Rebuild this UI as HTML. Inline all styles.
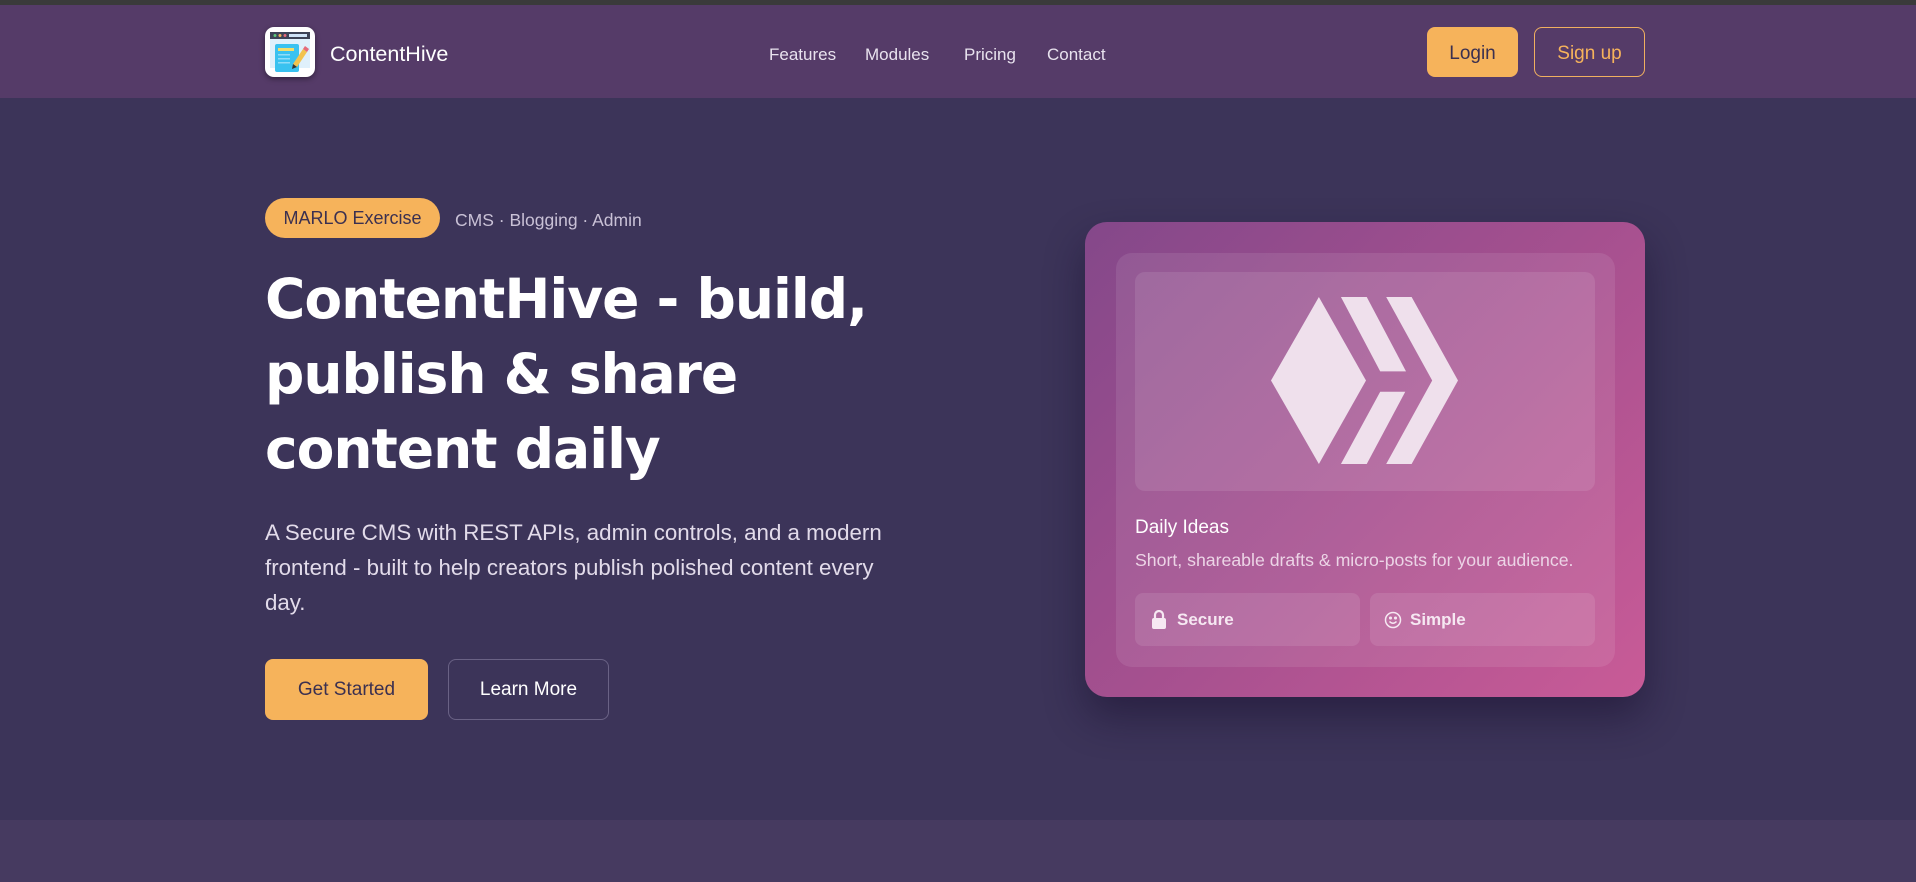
<!DOCTYPE html>
<html><head><meta charset="utf-8"><style>
*{margin:0;padding:0;box-sizing:border-box}
body{width:1916px;height:882px;overflow:hidden;background:#3c3459;font-family:"Liberation Sans",sans-serif;color:#fff;position:relative}
.top{position:absolute;left:0;top:0;width:1916px;height:5px;background:#3a3a3a}
nav{position:absolute;left:0;top:5px;width:1916px;height:93px;background:#553b68}
.logo{position:absolute;left:265px;top:22px;width:50px;height:50px;border-radius:9px;background:#fff;box-shadow:0 2px 6px rgba(0,0,0,.4);overflow:hidden}
.brand{position:absolute;left:330px;top:37px;font-size:21.5px;color:#fff}
.links{position:absolute;top:40px;font-size:17px;color:#e8e2ee}
.btn{position:absolute;border-radius:8px;font-size:19px;display:flex;align-items:center;justify-content:center}
.bot{position:absolute;left:0;top:820px;width:1916px;height:62px;background:#463a60}
.badge{position:absolute;left:265px;top:198px;width:175px;height:40px;border-radius:20px;background:#f6b35b;color:#3b3050;font-size:18px;display:flex;align-items:center;justify-content:center}
.tags{position:absolute;left:455px;top:210px;font-size:17.5px;color:#c9c1d6}
h1{position:absolute;left:265px;top:262px;font-family:"DejaVu Sans",sans-serif;font-size:55px;line-height:75px;font-weight:bold;letter-spacing:-1px;width:640px}
.p{position:absolute;left:265px;top:515px;font-size:22.3px;line-height:35px;color:#e2dbea;width:648px}
.card{position:absolute;left:1085px;top:222px;width:560px;height:475px;border-radius:22px;background:linear-gradient(135deg,#84488a 0%,#a5508f 50%,#c95b97 100%);box-shadow:0 20px 40px rgba(20,10,40,.45)}
.inner{position:absolute;left:31px;top:31px;width:499px;height:414px;border-radius:16px;background:rgba(255,255,255,.09)}
.img{position:absolute;left:19px;top:19px;width:460px;height:219px;border-radius:10px;background:rgba(255,255,255,.1)}
.chip{position:absolute;top:340px;width:225px;height:53px;border-radius:8px;background:rgba(255,255,255,.1);font-size:17px;font-weight:bold;color:#f6e8f2;display:flex;align-items:center}
</style></head><body>
<div class="top"></div>
<nav>
<div class="logo"><svg width="50" height="50" viewBox="0 0 50 50"><rect x="5" y="5" width="40" height="36" fill="#dff0fb"/><rect x="5" y="5" width="40" height="7" fill="#3d4356"/><circle cx="10" cy="8.5" r="1.5" fill="#5cc77a"/><circle cx="15" cy="8.5" r="1.5" fill="#f2b55b"/><circle cx="20" cy="8.5" r="1.5" fill="#e56a7a"/><rect x="24" y="7" width="18" height="3" fill="#cfe3f7"/><rect x="10" y="17" width="24" height="28" rx="2" fill="#39c2f0"/><rect x="13" y="21" width="16" height="3" fill="#f2dd6a"/><rect x="13" y="27" width="12" height="1.5" fill="#8fdcf8"/><rect x="13" y="31" width="12" height="1.5" fill="#8fdcf8"/><rect x="13" y="35" width="12" height="1.5" fill="#8fdcf8"/><path d="M28 37 L38 22 L42 25 L32 40 Z" fill="#f2c34e"/><path d="M38 22 L40 19 L44 22 L42 25Z" fill="#e56a7a"/><path d="M28 37 L32 40 L27 42Z" fill="#333"/></svg></div>
<div class="brand">ContentHive</div>
<div class="links" style="left:769px">Features</div>
<div class="links" style="left:865px">Modules</div>
<div class="links" style="left:964px">Pricing</div>
<div class="links" style="left:1047px">Contact</div>
<div class="btn" style="left:1427px;top:22px;width:91px;height:50px;padding-top:4px;background:#f6b35b;color:#3b3050">Login</div>
<div class="btn" style="left:1534px;top:22px;width:111px;height:50px;padding-top:4px;border:1.5px solid #f0b060;color:#f6b35b">Sign up</div>
</nav>
<div class="badge">MARLO Exercise</div>
<div class="tags">CMS · Blogging · Admin</div>
<h1>ContentHive - build, publish &amp; share content daily</h1>
<div class="p">A Secure CMS with REST APIs, admin controls, and a modern frontend - built to help creators publish polished content every day.</div>
<div class="btn" style="left:265px;top:659px;width:163px;height:61px;background:#f6b35b;color:#3b3050">Get Started</div>
<div class="btn" style="left:448px;top:659px;width:161px;height:61px;border:1px solid #6a6285;color:#fff">Learn More</div>
<div class="card"><div class="inner">
<div class="img"><svg style="position:absolute;left:136px;top:25px" width="187" height="167" viewBox="0 0 1000 1000" preserveAspectRatio="none" fill="#efe0ec"><path d="M256 0 L0 500 L256 1000 L508 500Z"/><path d="M374 0 L512 0 L722 445 L584 445Z"/><path d="M584 567 L718 567 L512 1000 L374 1000Z"/><path d="M616 0 L752 0 L1000 500 L752 1000 L616 1000 L862 500Z"/></svg></div>
<div style="position:absolute;left:19px;top:264px;font-size:19px;color:#fff">Daily Ideas</div>
<div style="position:absolute;left:19px;top:297px;font-size:17.7px;color:#ecd4e6">Short, shareable drafts &amp; micro-posts for your audience.</div>
<div class="chip" style="left:19px"><svg style="margin:0 10px 0 16px" width="16" height="19" viewBox="0 0 16 19"><path d="M4 8V5a4 4 0 0 1 8 0v3" stroke="#f6e8f2" stroke-width="2.2" fill="none"/><rect x="1" y="8" width="14" height="11" rx="2" fill="#f6e8f2"/></svg>Secure</div>
<div class="chip" style="left:254px"><svg style="margin:0 8px 0 14px" width="18" height="18" viewBox="0 0 18 18" fill="none" stroke="#f6e8f2" stroke-width="1.5"><circle cx="9" cy="9" r="7.5"/><circle cx="6.5" cy="7" r=".8" fill="#f6e8f2"/><circle cx="11.5" cy="7" r=".8" fill="#f6e8f2"/><path d="M5.5 10.5q3.5 3.5 7 0"/></svg>Simple</div>
</div></div>
<div class="bot"></div>
</body></html>
